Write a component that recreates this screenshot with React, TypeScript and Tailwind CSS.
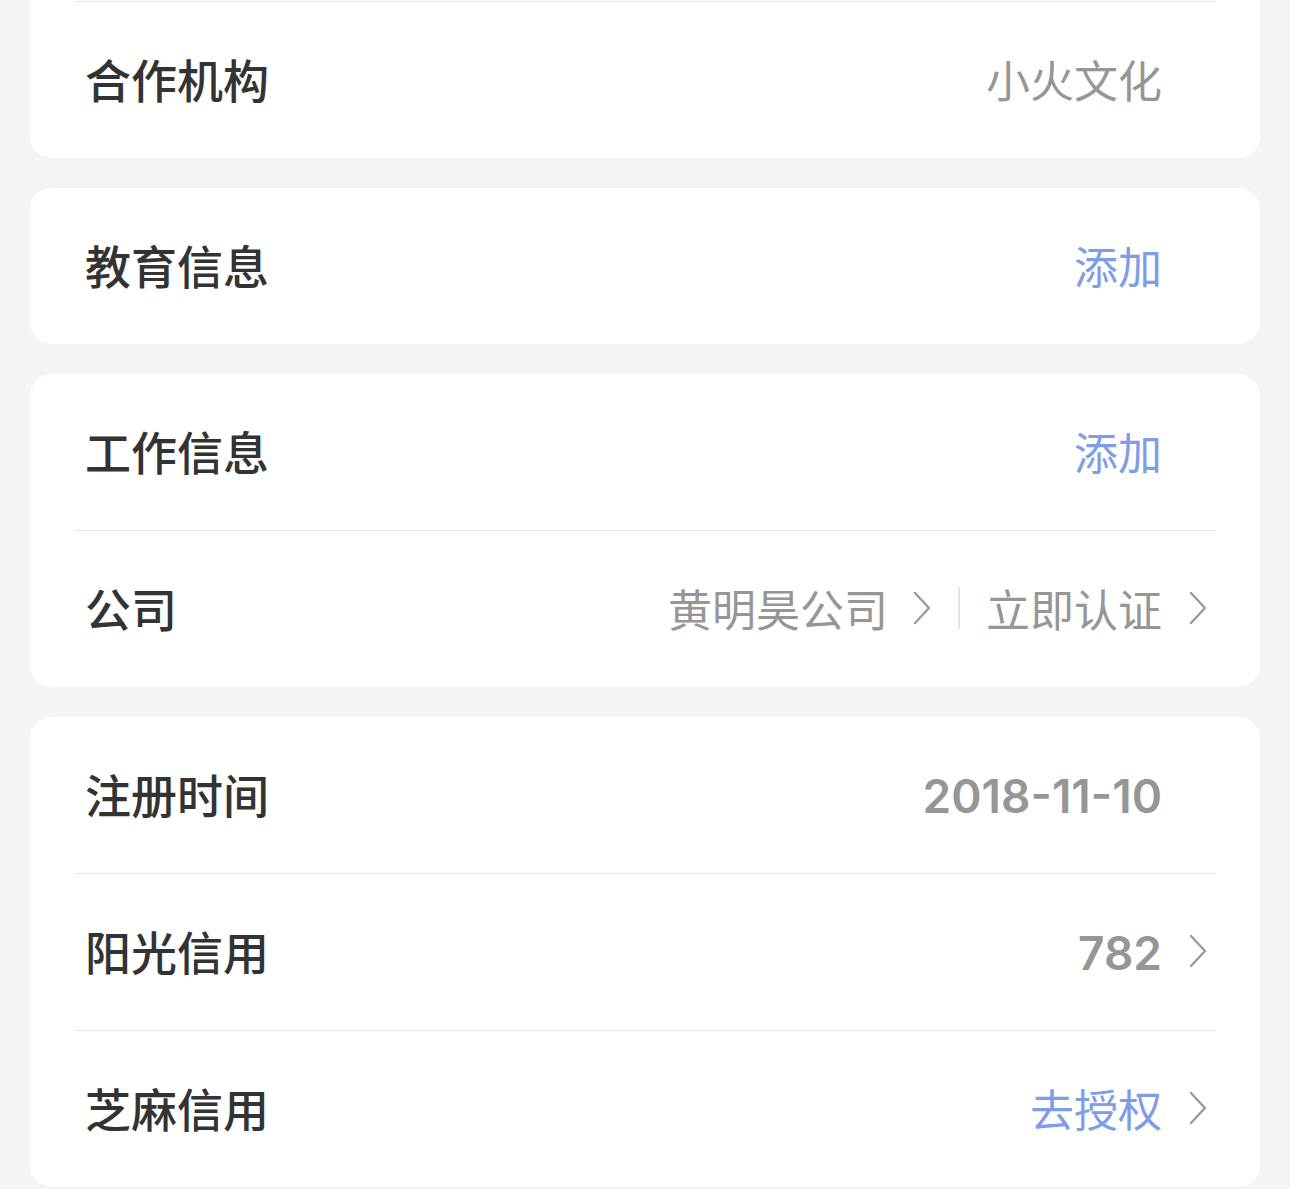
import type { ReactNode } from 'react';

const font = { fontFamily: '"Noto Sans CJK SC", "Noto Sans", sans-serif' };
const digits = { fontFamily: 'Inter, "Noto Sans", sans-serif' };

function Chevron() {
  return (
    <svg width="20" height="34" viewBox="0 0 20 34" className="shrink-0">
      <path d="M3 2 L17 17 L3 32" fill="none" stroke="#9a9a9a" strokeWidth="2.4" strokeLinecap="round" strokeLinejoin="round" />
    </svg>
  );
}

function Divider() {
  return <div className="mx-[44px] h-px bg-[#e6e6e6]" />;
}

interface RowProps {
  label: string;
  children: ReactNode;
  arrow?: boolean;
}

function Row({ label, children, arrow }: RowProps) {
  return (
    <div className="h-[156px] flex items-center justify-between pl-[55px] pr-[52px]">
      <span className="text-[46px] font-medium text-[#333333] leading-none -mt-[4px]">{label}</span>
      <div className="flex items-center -mt-[2px]">
        {children}
        <div className="w-[46px] flex justify-end">{arrow && <Chevron />}</div>
      </div>
    </div>
  );
}

function Value({ children, blue }: { children: ReactNode; blue?: boolean }) {
  return (
    <span className={`text-[44px] leading-none ${blue ? 'text-[#7d9de6]' : 'text-[#969696]'}`}>
      {children}
    </span>
  );
}

function Num({ children }: { children: ReactNode }) {
  return (
    <span className="text-[46px] font-semibold leading-none text-[#969696] mt-[3px]" style={digits}>
      {children}
    </span>
  );
}

export default function App() {
  return (
    <div className="min-h-screen bg-[#f4f4f4] px-[30px] pb-10" style={font}>
      <div className="bg-white rounded-b-[22px] pt-px">
        <Divider />
        <Row label="合作机构">
          <Value>小火文化</Value>
        </Row>
      </div>

      <div className="bg-white rounded-[22px] mt-[30px]">
        <Row label="教育信息">
          <Value blue>添加</Value>
        </Row>
      </div>

      <div className="bg-white rounded-[22px] mt-[30px]">
        <Row label="工作信息">
          <Value blue>添加</Value>
        </Row>
        <Divider />
        <Row label="公司" arrow>
          <Value>黄明昊公司</Value>
          <div className="ml-[24px]"><Chevron /></div>
          <div className="mx-[26px] w-[2px] h-[42px] bg-[#e3e3e3]" />
          <Value>立即认证</Value>
        </Row>
      </div>

      <div className="bg-white rounded-[22px] mt-[30px]">
        <Row label="注册时间">
          <Num>2018-11-10</Num>
        </Row>
        <Divider />
        <Row label="阳光信用" arrow>
          <Num>782</Num>
        </Row>
        <Divider />
        <Row label="芝麻信用" arrow>
          <Value blue>去授权</Value>
        </Row>
      </div>
    </div>
  );
}
